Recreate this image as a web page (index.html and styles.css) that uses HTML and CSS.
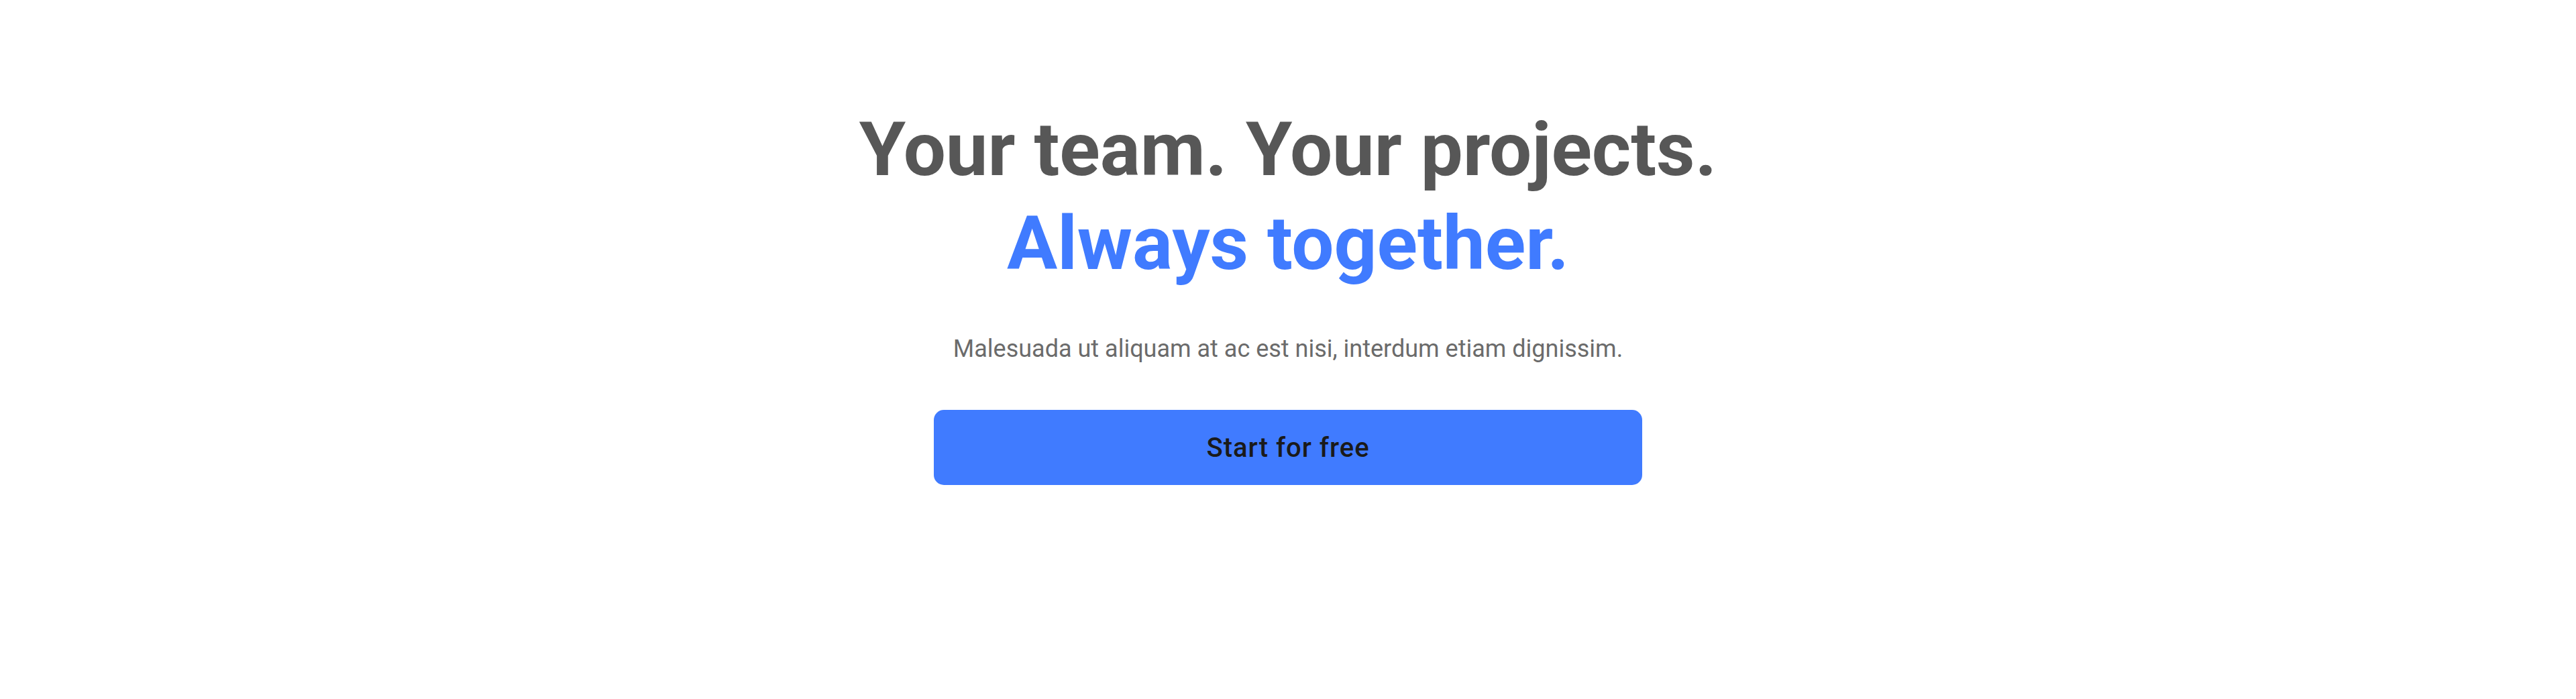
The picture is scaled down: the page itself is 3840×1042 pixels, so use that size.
FILE: index.html
```html
<!DOCTYPE html>
<html lang="en">
<head>
<meta charset="utf-8">
<title>Your team. Your projects.</title>
<link rel="stylesheet" href="styles.css">
</head>
<body>
<main class="hero">
  <h1 class="hero-title">
    <span class="hero-line">Your team. Your projects.</span>
    <span class="hero-line hero-accent">Always together.</span>
  </h1>
  <p class="hero-sub">Malesuada ut aliquam at ac est nisi, interdum etiam dignissim.</p>
  <a class="hero-cta" href="#">Start for free</a>
</main>
</body>
</html>
```
FILE: styles.css
```css
html, body {
  margin: 0;
  padding: 0;
  background: #ffffff;
}
body {
  font-family: Roboto, "Liberation Sans", Arial, sans-serif;
}
.hero {
  display: flex;
  flex-direction: column;
  align-items: center;
  padding-top: 153px;
}
.hero-title {
  margin: 0;
  display: flex;
  flex-direction: column;
  align-items: center;
  font-size: 112px;
  line-height: 140px;
  font-weight: 700;
  color: #575757;
  text-align: center;
}
.hero-accent {
  color: #407bff;
}
.hero-sub {
  margin: 63px 0 0;
  font-size: 36px;
  line-height: 48px;
  color: #6b6b6b;
  text-align: center;
}
.hero-cta {
  margin-top: 67px;
  width: 1056px;
  height: 112px;
  display: flex;
  align-items: center;
  justify-content: center;
  background: #407bff;
  border-radius: 15px;
  color: #1a1a1a;
  font-size: 40px;
  font-weight: 500;
  letter-spacing: 1px;
  text-decoration: none;
}
```
